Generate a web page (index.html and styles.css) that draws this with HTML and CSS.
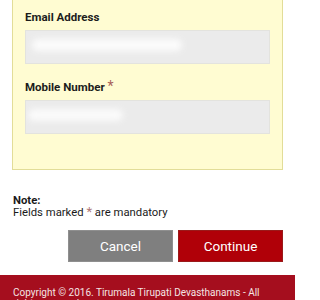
FILE: index.html
```html
<!DOCTYPE html>
<html>
<head>
<meta charset="utf-8">
<link rel="stylesheet" href="styles.css">
</head>
<body>
<div class="page">
  <div class="panel">
    <div class="field">
      <label class="label">Email Address</label>
      <div class="input"><span class="blur blur-email"></span></div>
    </div>
    <div class="field">
      <label class="label">Mobile Number <span class="req">*</span></label>
      <div class="input"><span class="blur blur-mobile"></span></div>
    </div>
  </div>
  <div class="note">
    <div class="note-title">Note:</div>
    <div class="note-text">Fields marked <span class="req">*</span> are mandatory</div>
  </div>
  <div class="actions">
    <button class="btn btn-cancel">Cancel</button>
    <button class="btn btn-continue">Continue</button>
  </div>
  <footer class="footer">
    <p class="copy">Copyright © 2016. Tirumala Tirupati Devasthanams - All rights reserved</p>
  </footer>
</div>
</body>
</html>
```
FILE: styles.css
```css
html, body {
  margin: 0;
  padding: 0;
  background: #ffffff;
  font-family: Roboto, "Noto Sans", Arial, sans-serif;
  color: #1a1a1a;
  overflow: hidden;
}
.page {
  width: 295px;
  height: 300px;
  overflow: hidden;
}
.panel {
  margin: 0 12px 0 12px;
  background: #fffcd2;
  border: 1px solid #e2dd98;
  border-top: none;
  padding: 10px 12px 35px 12px;
  display: flex;
  flex-direction: column;
  gap: 16px;
}
.field {
  display: flex;
  flex-direction: column;
  gap: 6px;
}
.label {
  font-size: 11.5px;
  font-weight: bold;
  line-height: 14px;
  color: #1c1c1c;
}
.req {
  color: #a8615a;
  font-weight: normal;
  font-size: 14px;
  vertical-align: top;
  line-height: 12px;
}
.input {
  height: 32px;
  background: #ebebeb;
  border: 1px solid #e3e3de;
  position: relative;
  overflow: hidden;
}
.blur {
  position: absolute;
  background: #ffffff;
  filter: blur(3px);
  border-radius: 6px;
}
.blur-email { left: 6px; top: 8px; width: 150px; height: 12px; opacity: 0.85; }
.blur-mobile { left: 2px; top: 8px; width: 95px; height: 12px; opacity: 0.8; }
.note {
  margin: 25px 12px 0 13px;
  font-size: 11.3px;
  line-height: 12px;
  color: #1a1a1a;
}
.note-title { font-weight: bold; }
.note-text .req { font-size: 13px; line-height: 10px; color: #b07878; }
.actions {
  display: flex;
  justify-content: flex-end;
  gap: 5px;
  margin: 11px 12px 0 12px;
}
.btn {
  width: 105px;
  height: 32px;
  border: 1px solid rgba(0,0,0,0.12);
  color: #ffffff;
  font-family: Roboto, "Noto Sans", Arial, sans-serif;
  font-size: 13.5px;
  padding: 0;
}
.btn-cancel { background: #7f7f7f; border-color: #8f8f8f; }
.btn-continue { background: #b00008; border-color: #9a1a1a; }
.footer {
  margin-top: 13px;
  background: #a50e1e;
  padding: 12px 12px 10px 13px;
}
.copy {
  margin: 0;
  color: #f4e4e4;
  font-size: 10px;
  line-height: 11px;
}
```
